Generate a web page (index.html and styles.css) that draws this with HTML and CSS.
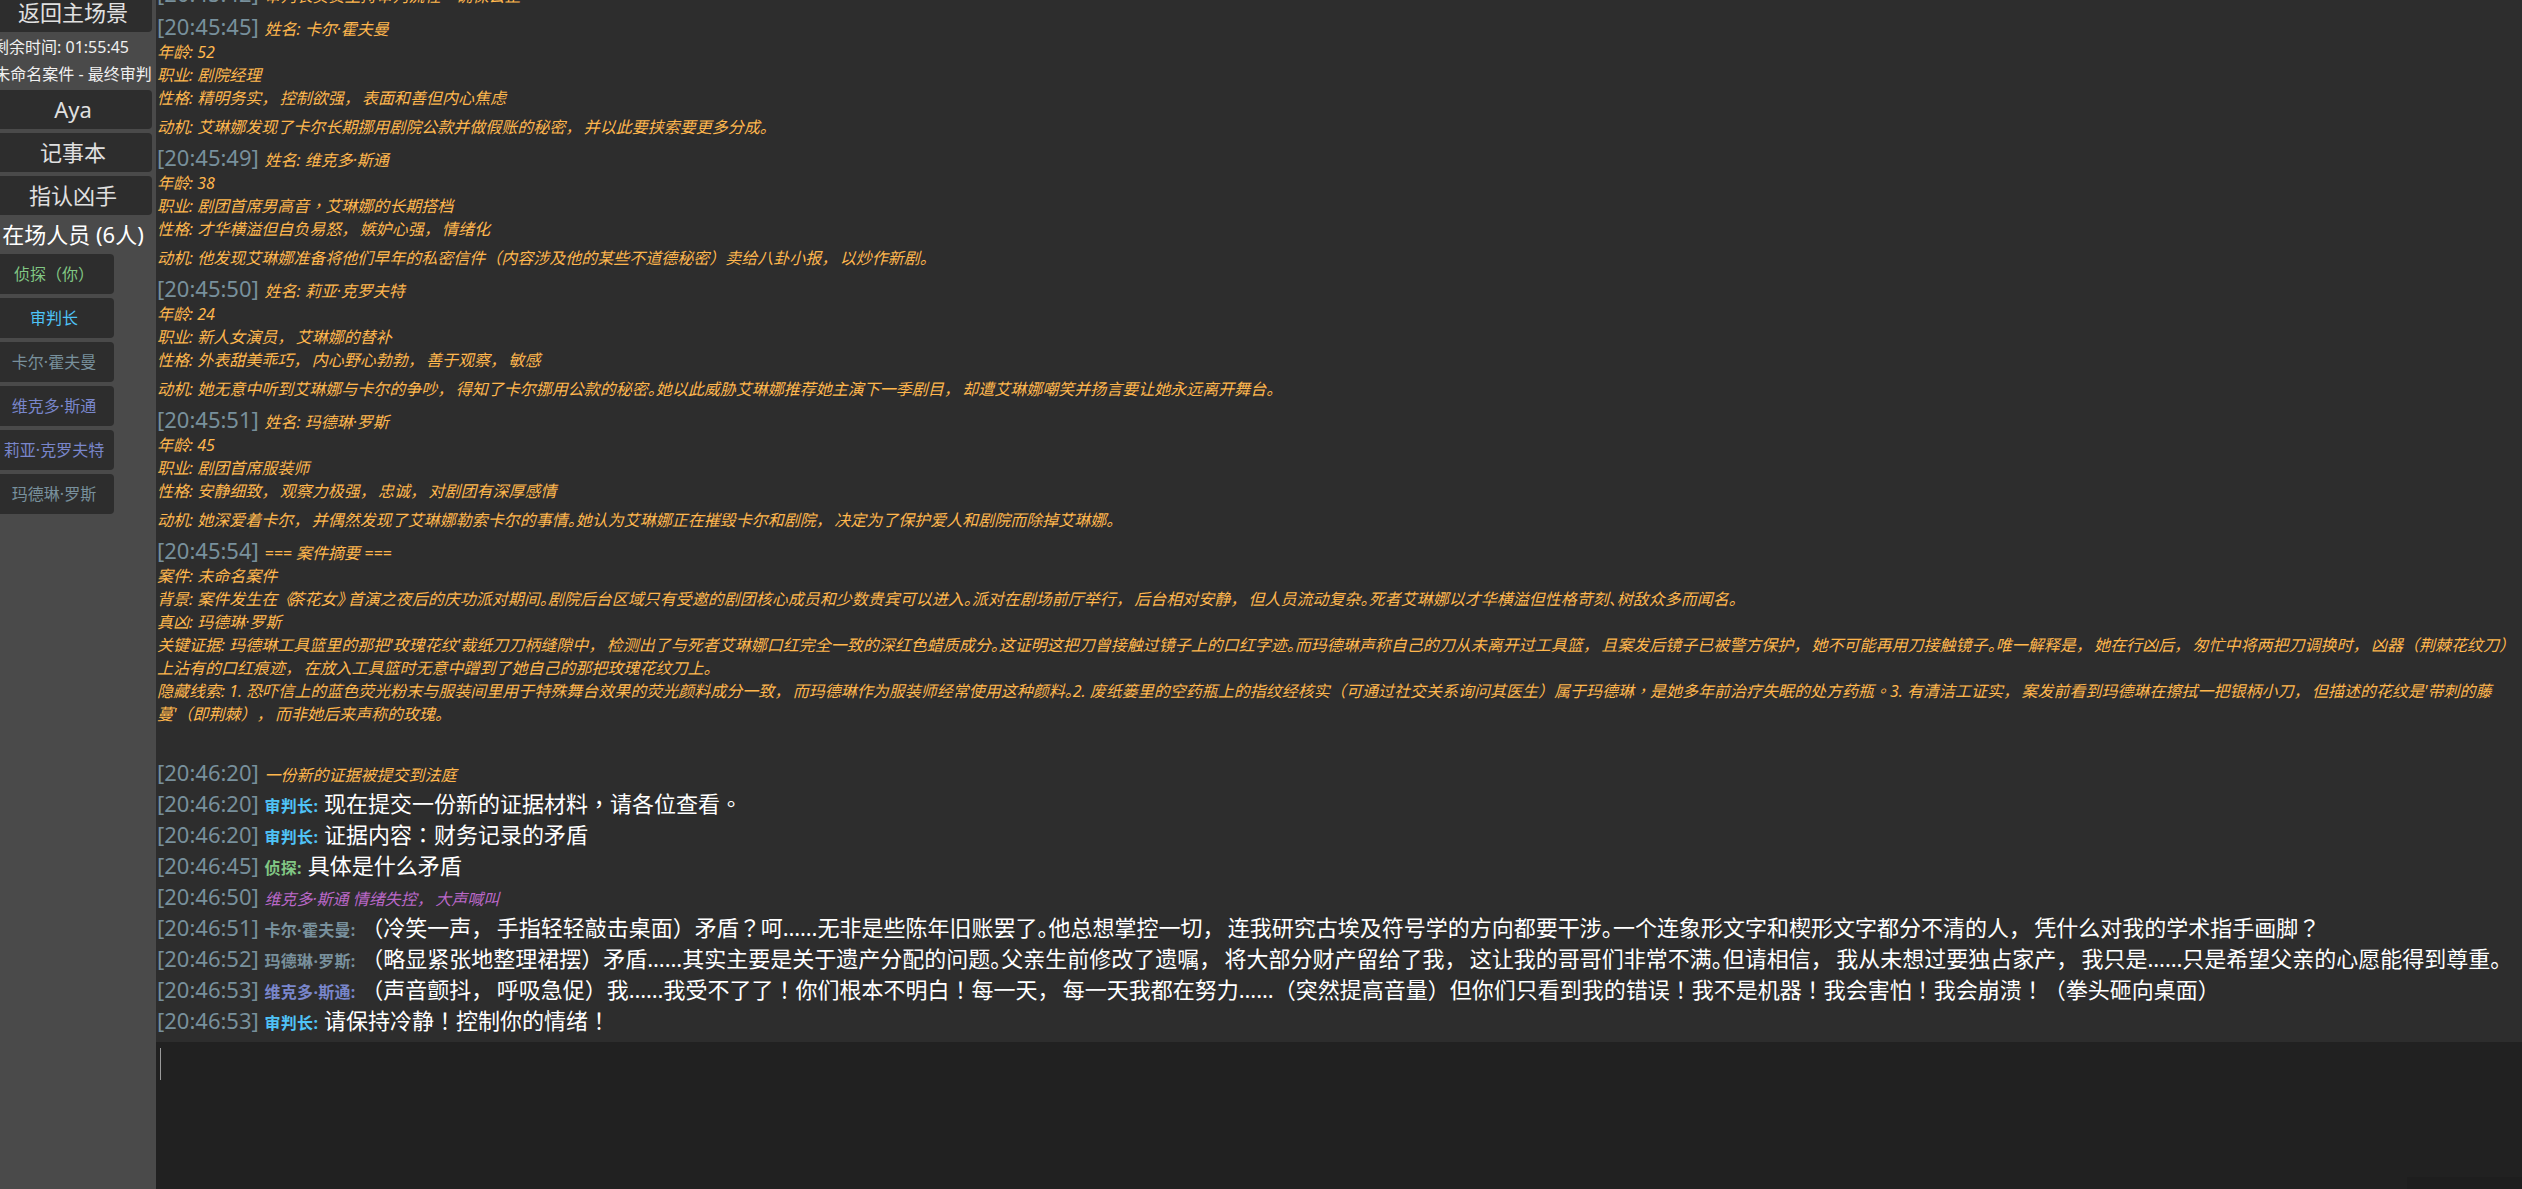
FILE: index.html
```html
<!DOCTYPE html>
<html>
<head>
    <meta charset="utf-8">
    <title>法庭审判</title>
    <link rel="stylesheet" href="styles.css">
</head>
<body>
    <div class="sidebar">
        <div class="btn">返回主场景</div>
        <div class="info time">剩余时间: 01:55:45</div>
        <div class="info">未命名案件 - 最终审判</div>
        <div class="btn">Aya</div>
        <div class="btn">记事本</div>
        <div class="btn">指认凶手</div>
        <div class="people-title">在场人员 (6人)</div>
        <div class="chip c-green">侦探<span class="tc" lang="zh-TW">（</span>你<span class="tc" lang="zh-TW">）</span></div>
        <div class="chip c-blue">审判长</div>
        <div class="chip c-grey">卡尔·霍夫曼</div>
        <div class="chip c-indigo">维克多·斯通</div>
        <div class="chip c-indigo">莉亚·克罗夫特</div>
        <div class="chip c-grey">玛德琳·罗斯</div>
    </div>

    <div class="main">
        <div class="chat">
            <div class="row head"><span class="ts">[20:45:42] </span><span class="sys">审判长负责主持审判流程<span class="tc" lang="zh-TW">，</span>确保公正</span></div>

            <div class="row head"><span class="ts">[20:45:45] </span><span class="sys">姓名: 卡尔·霍夫曼</span></div>
            <div class="line">年龄: 52</div>
            <div class="line">职业: 剧院经理</div>
            <div class="line">性格: 精明务实<span class="k">，</span>控制欲强<span class="k">，</span>表面和善但内心焦虑</div>
            <div class="line motive">动机: 艾琳娜发现了卡尔长期挪用剧院公款并做假账的秘密<span class="k">，</span>并以此要挟索要更多分成。</div>

            <div class="row head"><span class="ts">[20:45:49] </span><span class="sys">姓名: 维克多·斯通</span></div>
            <div class="line">年龄: 38</div>
            <div class="line">职业: 剧团首席男高音<span class="tc" lang="zh-TW">，</span>艾琳娜的长期搭档</div>
            <div class="line">性格: 才华横溢但自负易怒<span class="k">，</span>嫉妒心强<span class="k">，</span>情绪化</div>
            <div class="line motive">动机: 他发现艾琳娜准备将他们早年的私密信件（内容涉及他的某些不道德秘密）卖给八卦小报<span class="k">，</span>以炒作新剧。</div>

            <div class="row head"><span class="ts">[20:45:50] </span><span class="sys">姓名: 莉亚·克罗夫特</span></div>
            <div class="line">年龄: 24</div>
            <div class="line">职业: 新人女演员<span class="k">，</span>艾琳娜的替补</div>
            <div class="line">性格: 外表甜美乖巧<span class="k">，</span>内心野心勃勃<span class="k">，</span>善于观察<span class="k">，</span>敏感</div>
            <div class="line motive">动机: 她无意中听到艾琳娜与卡尔的争吵<span class="k">，</span>得知了卡尔挪用公款的秘密<span class="p">。</span>她以此威胁艾琳娜推荐她主演下一季剧目<span class="k">，</span>却遭艾琳娜嘲笑并扬言要让她永远离开舞台。</div>

            <div class="row head"><span class="ts">[20:45:51] </span><span class="sys">姓名: 玛德琳·罗斯</span></div>
            <div class="line">年龄: 45</div>
            <div class="line">职业: 剧团首席服装师</div>
            <div class="line">性格: 安静细致<span class="k">，</span>观察力极强<span class="k">，</span>忠诚<span class="k">，</span>对剧团有深厚感情</div>
            <div class="line motive">动机: 她深爱着卡尔<span class="k">，</span>并偶然发现了艾琳娜勒索卡尔的事情<span class="p">。</span>她认为艾琳娜正在摧毁卡尔和剧院<span class="k">，</span>决定为了保护爱人和剧院而除掉艾琳娜。</div>

            <div class="row head"><span class="ts">[20:45:54] </span><span class="sys">=== 案件摘要 ===</span></div>
            <div class="line">案件: 未命名案件</div>
            <div class="line">背景: 案件发生在<span class="q">《</span>茶花女<span class="q">》</span>首演之夜后的庆功派对期间<span class="p">。</span>剧院后台区域只有受邀的剧团核心成员和少数贵宾可以进入<span class="p">。</span>派对在剧场前厅举行<span class="k">，</span>后台相对安静<span class="k">，</span>但人员流动复杂<span class="p">。</span>死者艾琳娜以才华横溢但性格苛刻<span class="p">、</span>树敌众多而闻名。</div>
            <div class="line">真凶: 玛德琳·罗斯</div>
            <div class="line">关键证据: 玛德琳工具篮里的那把'玫瑰花纹'裁纸刀刀柄缝隙中<span class="k">，</span>检测出了与死者艾琳娜口红完全一致的深红色蜡质成分<span class="p">。</span>这证明这把刀曾接触过镜子上的口红字迹<span class="p">。</span>而玛德琳声称自己的刀从未离开过工具篮<span class="k">，</span>且案发后镜子已被警方保护<span class="k">，</span>她不可能再用刀接触镜子<span class="p">。</span>唯一解释是<span class="k">，</span>她在行凶后<span class="k">，</span>匆忙中将两把刀调换时<span class="k">，</span>凶器（荆棘花纹刀）上沾有的口红痕迹<span class="k">，</span>在放入工具篮时无意中蹭到了她自己的那把玫瑰花纹刀上。</div>
            <div class="line">隐藏线索: 1. 恐吓信上的蓝色荧光粉末与服装间里用于特殊舞台效果的荧光颜料成分一致<span class="k">，</span>而玛德琳作为服装师经常使用这种颜料<span class="p">。</span>2. 废纸篓里的空药瓶上的指纹经核实<span class="tc" lang="zh-TW">（</span>可通过社交关系询问其医生<span class="tc" lang="zh-TW">）</span>属于玛德琳<span class="tc" lang="zh-TW">，</span>是她多年前治疗失眠的处方药瓶<span class="tc" lang="zh-TW">。</span>3. 有清洁工证实<span class="k">，</span>案发前看到玛德琳在擦拭一把银柄小刀<span class="k">，</span>但描述的花纹是'带刺的藤蔓'（即荆棘）<span class="k">，</span>而非她后来声称的玫瑰。</div>

            <div class="row first"><span class="ts">[20:46:20] </span><span class="sys">一份新的证据被提交到法庭</span></div>
            <div class="row"><span class="ts">[20:46:20] </span><span class="who c-blue">审判长:</span> <span class="say">现在提交一份新的证据材料<span class="tc" lang="zh-TW">，</span>请各位查看<span class="tc" lang="zh-TW">。</span></span></div>
            <div class="row"><span class="ts">[20:46:20] </span><span class="who c-blue">审判长:</span> <span class="say">证据内容<span class="tc" lang="zh-TW">：</span>财务记录的矛盾</span></div>
            <div class="row"><span class="ts">[20:46:45] </span><span class="who c-green">侦探:</span> <span class="say">具体是什么矛盾</span></div>
            <div class="row"><span class="ts">[20:46:50] </span><span class="act">维克多·斯通 情绪失控<span class="k">，</span>大声喊叫</span></div>
            <div class="row"><span class="ts">[20:46:51] </span><span class="who c-grey">卡尔·霍夫曼:</span> <span class="say">（冷笑一声<span class="k">，</span>手指轻轻敲击桌面）矛盾<span class="tc" lang="zh-TW">？</span>呵……无非是些陈年旧账罢了<span class="p">。</span>他总想掌控一切<span class="k">，</span>连我研究古埃及符号学的方向都要干涉<span class="p">。</span>一个连象形文字和楔形文字都分不清的人<span class="k">，</span>凭什么对我的学术指手画脚<span class="tc" lang="zh-TW">？</span></span></div>
            <div class="row"><span class="ts">[20:46:52] </span><span class="who c-grey">玛德琳·罗斯:</span> <span class="say">（略显紧张地整理裙摆）矛盾……其实主要是关于遗产分配的问题<span class="p">。</span>父亲生前修改了遗嘱<span class="k">，</span>将大部分财产留给了我<span class="k">，</span>这让我的哥哥们非常不满<span class="p">。</span>但请相信<span class="k">，</span>我从未想过要独占家产<span class="k">，</span>我只是……只是希望父亲的心愿能得到尊重。</span></div>
            <div class="row"><span class="ts">[20:46:53] </span><span class="who c-indigo">维克多·斯通:</span> <span class="say">（声音颤抖<span class="k">，</span>呼吸急促）我……我受不了了<span class="tc" lang="zh-TW">！</span>你们根本不明白<span class="tc" lang="zh-TW">！</span>每一天<span class="k">，</span>每一天我都在努力……（突然提高音量）但你们只看到我的错误<span class="tc" lang="zh-TW">！</span>我不是机器<span class="tc" lang="zh-TW">！</span>我会害怕<span class="tc" lang="zh-TW">！</span>我会崩溃<span class="tc" lang="zh-TW">！</span>（拳头砸向桌面）</span></div>
            <div class="row"><span class="ts">[20:46:53] </span><span class="who c-blue">审判长:</span> <span class="say">请保持冷静<span class="tc" lang="zh-TW">！</span>控制你的情绪<span class="tc" lang="zh-TW">！</span></span></div>
        </div>
        <div class="input-box">
            <div class="caret"></div>
            <div class="status"></div>
        </div>
    </div>
</body>
</html>
```

FILE: styles.css
```css
html, body {
    height: 100%;
}

body {
    margin: 0;
    display: flex;
    overflow: hidden;
    background-color: #2d2d2d;
    font-family: "Noto Sans", "Noto Sans CJK SC", sans-serif;
    color: #e0e0e0;
    text-spacing-trim: space-all;
}

/* punctuation the log draws with other glyphs or other widths */
.tc {
    font-family: "Noto Sans CJK TC", sans-serif;
    line-height: 1;
}

.p {
    letter-spacing: -0.5em;
}

.k {
    letter-spacing: 0.15em;
}

.q {
    letter-spacing: -0.3em;
}

/* left column, the content is scrolled a bit up and to the right */
.sidebar {
    width: 156px;
    height: 100%;
    flex-shrink: 0;
    background-color: #4a4a4a;
    overflow: hidden;
    display: flex;
    flex-direction: column;
    align-items: flex-start;
    gap: 4px;
}

.btn {
    width: 158px;
    margin-left: -6px;
    height: 39px;
    line-height: 39px;
    text-align: center;
    font-size: 22px;
    background-color: #2d2d2d;
    border-radius: 4px;
    flex-shrink: 0;
}

.btn:first-child {
    margin-top: -7px;
}

.info {
    width: 158px;
    margin-left: -6px;
    display: flex;
    justify-content: center;
    white-space: nowrap;
    font-size: 16px;
    line-height: 23px;
    color: #f0f0f0;
    flex-shrink: 0;
}

.info.time {
    width: 134px;
}

.people-title {
    width: 158px;
    margin-left: -6px;
    line-height: 31px;
    text-align: center;
    font-size: 22px;
    color: #ffffff;
    white-space: nowrap;
    flex-shrink: 0;
}

.chip {
    width: 120px;
    margin-left: -6px;
    height: 40px;
    line-height: 40px;
    text-align: center;
    font-size: 16px;
    white-space: nowrap;
    background-color: #2d2d2d;
    border-radius: 4px;
    flex-shrink: 0;
}

.c-green { color: #81c784; }
.c-blue { color: #4fc3f7; }
.c-grey { color: #78909c; }
.c-indigo { color: #7986cb; }

/* chat */
.main {
    flex: 1;
    min-width: 0;
    display: flex;
    flex-direction: column;
}

.chat {
    height: 1042px;
    box-sizing: border-box;
    padding: 0 6px 6px 1px;
    overflow: hidden;
    display: flex;
    flex-direction: column;
    justify-content: flex-end;
    background-color: #2d2d2d;
}

.row {
    font-size: 22px;
    line-height: 31px;
    white-space: nowrap;
    flex-shrink: 0;
}

.row > span {
    line-height: 1;
}

.row.head {
    line-height: 29px;
    margin-top: 4px;
}

.row.first {
    margin-top: 31px;
}

.ts {
    font-size: 22px;
    color: #78909c;
}

.sys,
.line {
    font-size: 16px;
    font-style: italic;
    color: #ffb74d;
}

.line {
    line-height: 23px;
    flex-shrink: 0;
}

.line.motive {
    margin-top: 6px;
}

.who {
    font-size: 16px;
    font-weight: bold;
    letter-spacing: 0.3px;
}

.say {
    font-size: 22px;
    color: #ffffff;
}

.act {
    font-size: 16px;
    font-style: italic;
    color: #ba68c8;
}

/* input box at the bottom */
.input-box {
    flex: 1;
    position: relative;
    padding: 6px 4px;
    background-color: #212121;
}

.caret {
    width: 1px;
    height: 32px;
    background-color: #9a9a9a;
}

.status {
    position: absolute;
    right: 0;
    bottom: 0;
    width: 115px;
    height: 12px;
    background-color: #1e1e1e;
}
```
